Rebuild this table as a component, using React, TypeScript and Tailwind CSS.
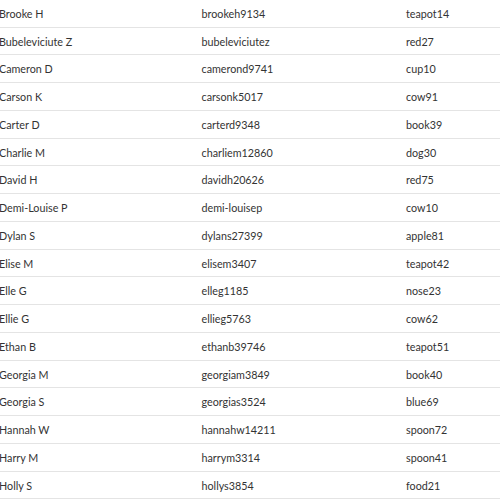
const rows: [string, string, string][] = [
  ["Brooke H", "brookeh9134", "teapot14"],
  ["Bubeleviciute Z", "bubeleviciutez", "red27"],
  ["Cameron D", "camerond9741", "cup10"],
  ["Carson K", "carsonk5017", "cow91"],
  ["Carter D", "carterd9348", "book39"],
  ["Charlie M", "charliem12860", "dog30"],
  ["David H", "davidh20626", "red75"],
  ["Demi-Louise P", "demi-louisep", "cow10"],
  ["Dylan S", "dylans27399", "apple81"],
  ["Elise M", "elisem3407", "teapot42"],
  ["Elle G", "elleg1185", "nose23"],
  ["Ellie G", "ellieg5763", "cow62"],
  ["Ethan B", "ethanb39746", "teapot51"],
  ["Georgia M", "georgiam3849", "book40"],
  ["Georgia S", "georgias3524", "blue69"],
  ["Hannah W", "hannahw14211", "spoon72"],
  ["Harry M", "harrym3314", "spoon41"],
  ["Holly S", "hollys3854", "food21"],
];

export default function App() {
  return (
    <div className="w-[500px] h-[500px] overflow-hidden bg-white">
      <div className="-mt-[1.25px] -ml-[7px] font-['Lato',sans-serif] text-[10.75px] text-[#333]">
        {rows.map((r) => (
          <div key={r[1]} className="flex h-[27.75px] items-center border-t border-[#e4e4e4] pt-[1.5px]">
            <div className="w-[202.5px] px-[6px] whitespace-nowrap">{r[0]}</div>
            <div className="w-[204.5px] px-[6px] whitespace-nowrap">{r[1]}</div>
            <div className="flex-1 px-[6px] whitespace-nowrap">{r[2]}</div>
          </div>
        ))}
        <div className="h-[27.75px] border-t border-[#e4e4e4]" />
      </div>
    </div>
  );
}
